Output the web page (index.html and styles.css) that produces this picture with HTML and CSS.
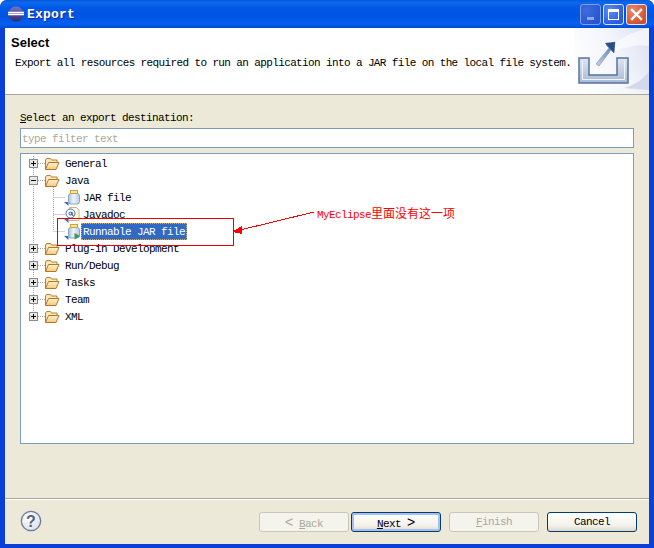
FILE: index.html
```html
<!DOCTYPE html>
<html lang="en">
<head>
<meta charset="utf-8">
<title>Export</title>
<link rel="stylesheet" href="styles.css">
</head>
<body>
<svg class="defs" width="0" height="0" aria-hidden="true">
  <defs>
    <linearGradient id="folderFill" x1="0" y1="0" x2="0" y2="1"><stop offset="0" stop-color="#fff3d2"/><stop offset="1" stop-color="#f9c877"/></linearGradient>
    <linearGradient id="jarFill" x1="0" y1="0" x2="1" y2="0"><stop offset="0" stop-color="#a9bfdc"/><stop offset=".45" stop-color="#eef3fa"/><stop offset="1" stop-color="#b9cbe4"/></linearGradient>
    <linearGradient id="trayFill" x1="0" y1="0" x2="0" y2="1"><stop offset="0" stop-color="#dfe5f0"/><stop offset="1" stop-color="#a9bad4"/></linearGradient>
    <linearGradient id="arrowFill" x1="0" y1="1" x2="1" y2="0"><stop offset="0" stop-color="#c6d5e8"/><stop offset="1" stop-color="#4a74a8"/></linearGradient>
    <symbol id="plus" viewBox="0 0 9 9"><rect x=".5" y=".5" width="8" height="8" fill="#e8e8e0" stroke="#7b8ea6"/><path d="M2 4.500h5M4.500 2v5" stroke="#000" fill="none"/></symbol>
    <symbol id="minus" viewBox="0 0 9 9"><rect x=".5" y=".5" width="8" height="8" fill="#e8e8e0" stroke="#7b8ea6"/><path d="M2 4.500h5" stroke="#000" fill="none"/></symbol>
    <symbol id="folder" viewBox="0 0 16 14">
      <path d="M1.500 12.500V3l1-1.500h4l1 1.500h5.500v2" fill="#fbe6b8" stroke="#b5812f"/>
      <path d="M1.500 12.500l3-7h10.500l-3 7z" fill="url(#folderFill)" stroke="#b5762a"/>
    </symbol>
    <symbol id="jar" viewBox="0 0 17 16">
      <path d="M0 12h4.500v4z" fill="#2f6cb0"/>
      <rect x="4.500" y="3.500" width="11" height="10.500" rx="2.500" fill="url(#jarFill)" stroke="#8ea3bf"/>
      <rect x="6.500" y=".5" width="7" height="3" fill="#fbe58c" stroke="#c2a648"/>
    </symbol>
    <symbol id="doc" viewBox="0 0 17 16">
      <path d="M0 12h4.500v4z" fill="#2f6cb0"/>
      <path d="M5.500.5h7l2.500 2.500V13.500h-10z" fill="#fdf8e6" stroke="#c9b98a"/>
      <circle cx="6.500" cy="6.500" r="4.500" fill="#fff" stroke="#4a6fa8"/>
      <circle cx="6.500" cy="6.500" r="1.500" fill="none" stroke="#1f4d95"/>
      <path d="M8 5v3l1.500.5" fill="none" stroke="#1f4d95"/>
    </symbol>
    <symbol id="runjar" viewBox="0 0 17 16">
      <path d="M0 12h4.500v4z" fill="#2f6cb0"/>
      <rect x="4.500" y="3.500" width="11" height="10.500" rx="2.500" fill="url(#jarFill)" stroke="#8ea3bf"/>
      <rect x="6.500" y=".5" width="7" height="3" fill="#fbe58c" stroke="#c2a648"/>
      <path d="M10.500 9l5.500 3-5.500 3.500z" fill="#2f9e55"/>
    </symbol>
  </defs>
</svg>
<div class="window">
  <header class="titlebar">
    <svg class="app-icon" width="16" height="16" viewBox="0 0 16 16"><defs><linearGradient id="ec" x1="0" y1="0" x2="0" y2="1"><stop offset="0" stop-color="#7a73c4"/><stop offset="1" stop-color="#2b2a6e"/></linearGradient></defs><circle cx="8" cy="8" r="7.500" fill="url(#ec)"/><path d="M0 6.500h16M0 8.500h16" stroke="#fff" stroke-width="1.300"/></svg>
    <span class="title-text">Export</span>
    <div class="caption-buttons">
      <span class="cap cap-min"><i></i></span>
      <span class="cap cap-max"><i></i></span>
      <span class="cap cap-close"><svg width="13" height="13" viewBox="0 0 13 13"><path d="M2 2l9 9M11 2l-9 9" stroke="#fff" stroke-width="2.400" stroke-linecap="square"/></svg></span>
    </div>
  </header>
  <div class="client">
    <section class="banner">
      <div class="banner-text">
        <h1>Select</h1>
        <p>Export all resources required to run an application into a JAR file on the local file system.</p>
      </div>
      <svg class="banner-art" width="75" height="66" viewBox="0 0 75 66">
        <defs><linearGradient id="wash" x1="0" y1=".7" x2="1" y2=".3"><stop offset="0" stop-color="#fff"/><stop offset=".6" stop-color="#f3f5fb"/><stop offset="1" stop-color="#dfe4f3"/></linearGradient></defs>
        <rect width="75" height="66" fill="url(#wash)"/>
        <path d="M75 0Q40 8 28 30Q55 14 75 18z" fill="#fff" opacity=".6"/>
        <path d="M75 44Q65 56 50 60L75 62z" fill="#d3d9ea"/>
        <path d="M5 30h10v17h28V30h11v25H5z" fill="url(#trayFill)" stroke="#55739f" stroke-width="1.500"/>
        <path d="M8.500 33.500v18h42V33.500" fill="none" stroke="#f2f5fa"/>
        <path d="M22 36L35 20l-3-3 9-3-1 11-3-3-12 16z" fill="url(#arrowFill)" stroke="#7f9bc0" stroke-width=".7"/>
        <path d="M31 15l10-1-1 11z" fill="#2a4f85"/>
      </svg>
    </section>
    <main class="main">
      <label class="field-label" for="filter"><u>S</u>elect an export destination:</label>
      <input class="filter" id="filter" type="text" placeholder="type filter text">
      <div class="tree">
        <svg class="guides" width="60" height="180" viewBox="0 0 60 180" aria-hidden="true">
          <path d="M12.500 2V164M17 9.500h7M17 26.500h7M17 94.500h7M17 111.500h7M17 128.500h7M17 145.500h7M17 162.500h7M32.500 33V77M32.500 43.500h12M32.500 60.500h12M32.500 77.500h12" fill="none" stroke="#a6a6a6" stroke-dasharray="1 1"/>
        </svg>
        <div class="row"><svg class="exp"><use href="#plus"/></svg><svg class="ico"><use href="#folder"/></svg><span>General</span></div>
        <div class="row"><svg class="exp"><use href="#minus"/></svg><svg class="ico"><use href="#folder"/></svg><span>Java</span></div>
        <div class="row child"><svg class="ico16"><use href="#jar"/></svg><span>JAR file</span></div>
        <div class="row child"><svg class="ico16"><use href="#doc"/></svg><span>Javadoc</span></div>
        <div class="row child"><svg class="ico16"><use href="#runjar"/></svg><span class="selected">Runnable JAR file</span></div>
        <div class="row"><svg class="exp"><use href="#plus"/></svg><svg class="ico"><use href="#folder"/></svg><span>Plug-in Development</span></div>
        <div class="row"><svg class="exp"><use href="#plus"/></svg><svg class="ico"><use href="#folder"/></svg><span>Run/Debug</span></div>
        <div class="row"><svg class="exp"><use href="#plus"/></svg><svg class="ico"><use href="#folder"/></svg><span>Tasks</span></div>
        <div class="row"><svg class="exp"><use href="#plus"/></svg><svg class="ico"><use href="#folder"/></svg><span>Team</span></div>
        <div class="row"><svg class="exp"><use href="#plus"/></svg><svg class="ico"><use href="#folder"/></svg><span>XML</span></div>
      </div>
    </main>
    <footer class="footer">
      <svg class="help" width="22" height="22" viewBox="0 0 22 22"><defs><radialGradient id="hg" cx=".4" cy=".35" r=".8"><stop offset="0" stop-color="#fff"/><stop offset="1" stop-color="#d5dae6"/></radialGradient></defs><circle cx="11" cy="11" r="9.700" fill="url(#hg)" stroke="#6b7a99" stroke-width="1.300"/><text x="11" y="16.500" text-anchor="middle" class="help-mark">?</text></svg>
      <div class="buttons">
        <button class="btn" disabled><span class="chev">&lt;</span> <u>B</u>ack</button>
        <button class="btn default"><u>N</u>ext <span class="chev">&gt;</span></button>
        <button class="btn gap" disabled><u>F</u>inish</button>
        <button class="btn gap">Cancel</button>
      </div>
    </footer>
  </div>
  <svg class="annotation" width="654" height="548" viewBox="0 0 654 548" aria-hidden="true" shape-rendering="crispEdges">
    <rect x="57.500" y="218.500" width="176" height="27" fill="none" stroke="#e60000"/>
    <path d="M314 212L236 231" stroke="#f00" fill="none"/>
    <path d="M232 232l10-6v8z" fill="#f00"/>
  </svg>
  <span class="note">MyEclipse<span class="note-cjk">里面没有这一项</span></span>
</div>
</body>
</html>
```
FILE: styles.css
```css
* { box-sizing: border-box; }
html, body { margin: 0; padding: 0; background: #fff; }
.defs { position: absolute; }
.window {
  position: relative;
  width: 654px;
  height: 548px;
  display: flex;
  flex-direction: column;
  overflow: hidden;
  background: #0a3fd8;
  border-radius: 7px 7px 0 0;
  font: 11px "Liberation Mono", "Noto Sans CJK SC", monospace;
  letter-spacing: -0.6px;
  color: #000;
}
.titlebar {
  height: 28px;
  flex: none;
  display: flex;
  align-items: center;
  padding: 0 7px 0 8px;
  background: linear-gradient(#0a58d8 0, #0a6af0 3px, #0258e4 8px, #0054e3 16px, #0560ee 24px, #0348d6 28px);
}
.app-icon { flex: none; margin-right: 3px; }
.title-text {
  color: #fff;
  font-size: 13px;
  font-weight: bold;
  line-height: 16px;
  padding-top: 2px;
  letter-spacing: 0.2px;
  text-shadow: 1px 1px 0 #0a2f9c;
}
.caption-buttons { margin-left: auto; display: flex; gap: 2px; }
.cap {
  width: 21px;
  height: 21px;
  border: 1px solid #dfe8fb;
  border-radius: 3px;
  display: flex;
  align-items: center;
  justify-content: center;
  background: radial-gradient(circle at 30% 30%, #5a8cf2, #2a5ae0 75%);
}
.cap-min { background: radial-gradient(circle at 30% 30%, #3c6de0, #2a55d0 75%); border-color: #7f9ee8; align-items: flex-end; padding-bottom: 4px; }
.cap-min i { width: 7px; height: 3px; background: #8fa8ea; display: block; }
.cap-max i { width: 11px; height: 11px; border: 1px solid #fff; border-top-width: 3px; display: block; }
.cap-close { background: radial-gradient(circle at 30% 30%, #ea8a6a, #d3502a 75%); }
.client {
  flex: 1;
  margin: 0 5px 4px;
  display: flex;
  flex-direction: column;
  background: #ece9d8;
  min-height: 0;
}
.banner {
  height: 67px;
  flex: none;
  display: flex;
  background: #fff;
  border-bottom: 1px solid #aca899;
}
.banner-text { flex: 1; padding: 7px 0 0 6px; }
.banner h1 {
  margin: 0;
  font: bold 13px/16px "Liberation Sans", sans-serif;
  letter-spacing: 0;
}
.banner p { margin: 6px 0 0 4px; line-height: 13px; white-space: nowrap; letter-spacing: -0.62px; }
.banner-art { flex: none; }
.main {
  flex: 1;
  min-height: 0;
  padding: 16px 15px 0;
  display: flex;
  flex-direction: column;
  border-top: 1px solid #ece9d8;
}
.field-label { line-height: 13px; height: 16px; }
.filter {
  height: 20px;
  flex: none;
  width: 614px;
  border: 1px solid #7f9db9;
  background: #fff;
  padding: 2px 1px 0;
  margin: 0;
  outline: none;
  font: inherit;
  letter-spacing: inherit;
}
.filter::placeholder { color: #aca899; opacity: 1; }
.tree {
  position: relative;
  margin-top: 5px;
  width: 614px;
  height: 291px;
  flex: none;
  background: #fff;
  border: 1px solid #7f9db9;
  padding-top: 1px;
}
.guides { position: absolute; left: 0; top: 0; }
.row { position: relative; height: 17px; display: flex; align-items: center; padding-left: 8px; }
.row > span { line-height: 15px; padding-top: 2px; white-space: nowrap; }
.exp { width: 9px; height: 9px; flex: none; margin-right: 6px; }
.ico { width: 16px; height: 14px; flex: none; margin-right: 5px; }
.child { padding-left: 43px; }
.ico16 { width: 17px; height: 16px; flex: none; margin-right: 2px; }
.row > .selected {
  background: #316ac5;
  color: #fff;
  outline: 1px dotted #c9b070;
  outline-offset: -1px;
  padding: 2px 2px 0;
  margin-left: -2px;
}
.footer {
  height: 46px;
  flex: none;
  display: flex;
  align-items: flex-start;
  padding: 13px 12px 0 15px;
  border-top: 1px solid #aca899;
  box-shadow: inset 0 1px 0 #fff;
}
.help { flex: none; margin-top: -2px; }
.help-mark { font: bold 16px "Liberation Sans", sans-serif; fill: #56627f; letter-spacing: 0; }
.buttons { margin-left: auto; display: flex; gap: 2px; }
.btn {
  width: 90px;
  height: 20px;
  padding: 0;
  border: 1px solid #003c74;
  border-radius: 3px;
  background: linear-gradient(#fff, #f3f2ea 70%, #dcd8c8);
  font: inherit;
  letter-spacing: inherit;
  color: #000;
  white-space: nowrap;
}
.btn.gap { margin-left: 6px; }
.btn.default { box-shadow: inset 0 0 0 2px #a9c0ea; }
.btn:disabled { border-color: #c9c7ba; background: #f4f3ec; color: #aca899; }
.chev { font: 14px/1 "Liberation Sans", sans-serif; letter-spacing: 0; }
.annotation { position: absolute; left: 0; top: 0; pointer-events: none; }
.note {
  position: absolute;
  left: 317px;
  top: 206px;
  font-size: 11px;
  line-height: 14px;
  color: #f00;
  white-space: nowrap;
}
.note-cjk { font: 12px/14px "Noto Sans CJK SC", sans-serif; letter-spacing: 0; }
```
